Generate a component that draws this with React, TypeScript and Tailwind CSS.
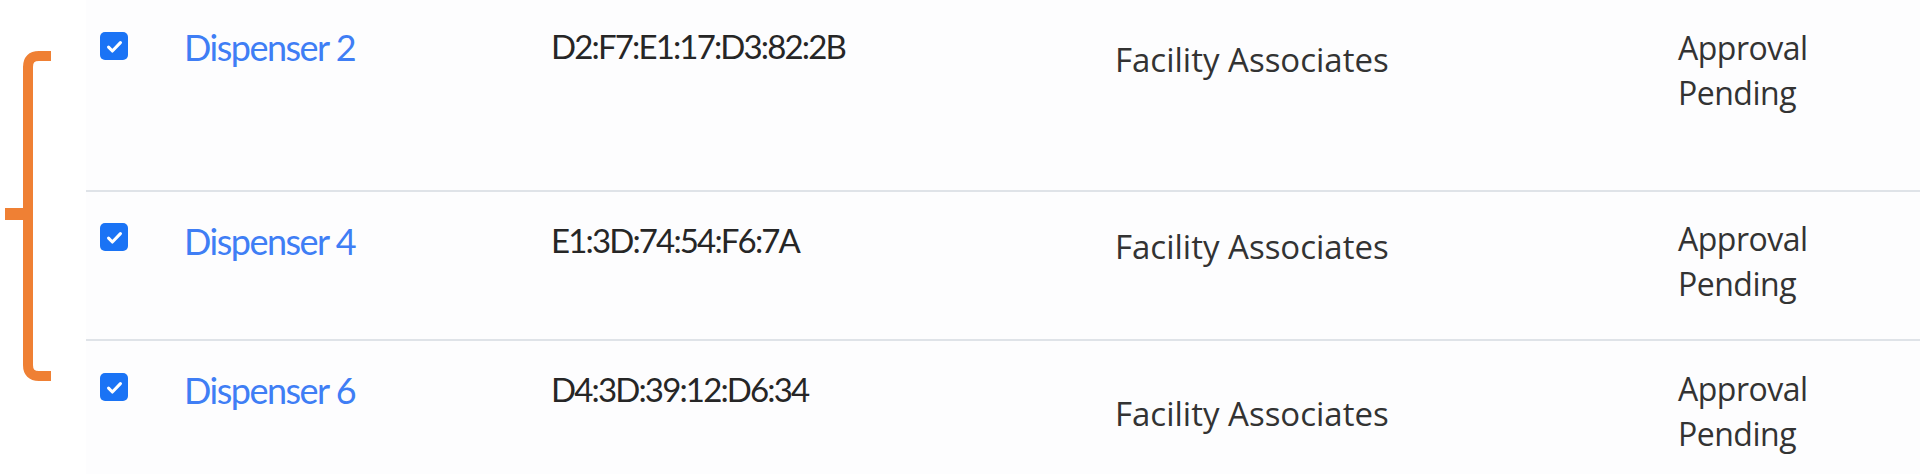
import React from "react";

const rows = [
  { name: "Dispenser 2", mac: "D2:F7:E1:17:D3:82:2B", h: "h-[190px]", boxTop: "mt-[32px]", textTop: "mt-[29px]", macTop: "mt-[30px]", facTop: "mt-[43px]", statTop: "mt-[25px]" },
  { name: "Dispenser 4", mac: "E1:3D:74:54:F6:7A", h: "h-[147px]", boxTop: "mt-[31px]", textTop: "mt-[31px]", macTop: "mt-[32px]", facTop: "mt-[38px]", statTop: "mt-[24px]" },
  { name: "Dispenser 6", mac: "D4:3D:39:12:D6:34", h: "h-[137px]", boxTop: "mt-[32px]", textTop: "mt-[31px]", macTop: "mt-[32px]", facTop: "mt-[56px]", statTop: "mt-[25px]" },
];

function CheckBox() {
  return (
    <div className="w-[28px] h-[28px] rounded-[5px] bg-[#1a73f5] flex items-center justify-center">
      <svg width="19" height="19" viewBox="0 0 16 16" fill="none">
        <path d="M3 8.6l3.2 3.2L13 4.8" stroke="white" strokeWidth="2.6" strokeLinecap="round" strokeLinejoin="round" />
      </svg>
    </div>
  );
}

function Bracket() {
  return (
    <svg width="86" height="474" viewBox="0 0 86 474" fill="none">
      <path d="M51 56 H39 Q28 56 28 67 V365 Q28 376 39 376 H51" stroke="#ef8034" strokeWidth="10" />
      <path d="M5 214 H28" stroke="#ef8034" strokeWidth="12" />
    </svg>
  );
}

export default function App() {
  return (
    <div className="w-[1920px] h-[474px] overflow-hidden bg-white flex">
      <div className="w-[86px] shrink-0">
        <Bracket />
      </div>
      <div className="flex-1 bg-[#fdfdfe] flex flex-col">
        {rows.map((r, i) => (
          <div key={r.name} className="flex flex-col">
            {i > 0 && <div className="h-[2px] bg-[#dfe3e8]" />}
            <div className={`${r.h} grid grid-cols-[84px_367px_564px_563px_1fr] pl-[14px]`}>
              <div className={r.boxTop}>
                <CheckBox />
              </div>
              <div className={`${r.textTop} text-[36px] leading-none tracking-[-1.5px] text-[#3f7ef5] font-['Lato',sans-serif]`}>
                {r.name}
              </div>
              <div className={`${r.macTop} text-[33px] leading-none tracking-[-1.85px] text-[#262626] font-['Lato',sans-serif]`}>
                {r.mac}
              </div>
              <div className={`${r.facTop} text-[33px] leading-none text-[#333] font-['Open_Sans',sans-serif]`}>
                Facility Associates
              </div>
              <div className={`${r.statTop} text-[32px] leading-[45px] text-[#333] font-['Open_Sans',sans-serif] tracking-[-0.5px]`}>
                <div>Approval</div>
                <div>Pending</div>
              </div>
            </div>
          </div>
        ))}
      </div>
    </div>
  );
}
